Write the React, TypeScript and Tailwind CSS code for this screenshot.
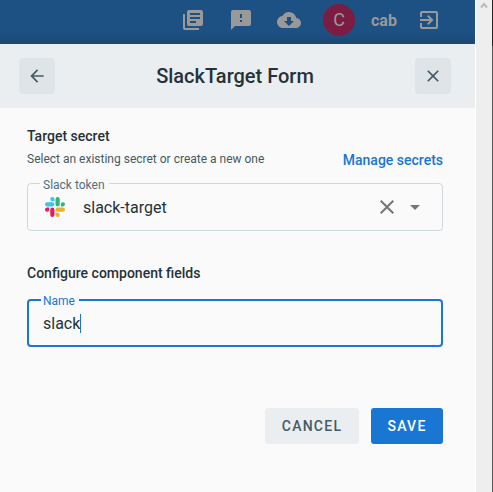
import type { ReactNode } from 'react';
import {
  MdLibraryBooks,
  MdSmsFailed,
  MdCloudDownload,
  MdExitToApp,
  MdArrowBack,
  MdClose,
  MdArrowDropDown,
} from 'react-icons/md';

function SlackLogo() {
  return (
    <svg width="20" height="20" viewBox="0 0 24 24" className="shrink-0">
      <path fill="#36c5f0" d="M8.834 0a2.528 2.528 0 0 0-2.521 2.522 2.528 2.528 0 0 0 2.521 2.521h2.522V2.522A2.528 2.528 0 0 0 8.834 0zM8.834 6.313H2.522A2.528 2.528 0 0 0 0 8.834a2.528 2.528 0 0 0 2.522 2.522h6.312a2.528 2.528 0 0 0 2.522-2.522 2.528 2.528 0 0 0-2.522-2.521z" />
      <path fill="#2eb67d" d="M18.956 8.834a2.528 2.528 0 0 1 2.522-2.521A2.528 2.528 0 0 1 24 8.834a2.528 2.528 0 0 1-2.522 2.522h-2.522V8.834zM17.688 8.834a2.528 2.528 0 0 1-2.523 2.522 2.527 2.527 0 0 1-2.52-2.522V2.522A2.527 2.527 0 0 1 15.165 0a2.528 2.528 0 0 1 2.523 2.522v6.312z" />
      <path fill="#ecb22e" d="M15.165 18.956a2.528 2.528 0 0 1 2.523 2.522A2.528 2.528 0 0 1 15.165 24a2.527 2.527 0 0 1-2.52-2.522v-2.522h2.52zM15.165 17.688a2.527 2.527 0 0 1-2.52-2.523 2.526 2.526 0 0 1 2.52-2.52h6.313A2.527 2.527 0 0 1 24 15.165a2.528 2.528 0 0 1-2.522 2.523h-6.313z" />
      <path fill="#e01e5a" d="M5.042 15.165a2.528 2.528 0 0 1-2.52 2.523A2.528 2.528 0 0 1 0 15.165a2.527 2.527 0 0 1 2.522-2.52h2.52v2.52zM6.313 15.165a2.527 2.527 0 0 1 2.521-2.52 2.527 2.527 0 0 1 2.521 2.52v6.313A2.528 2.528 0 0 1 8.834 24a2.528 2.528 0 0 1-2.521-2.522v-6.313z" />
    </svg>
  );
}

function TopBar() {
  return (
    <header className="flex h-11 items-start bg-linear-to-b from-[#1d5083] from-75% to-[#1c4870] pl-[181px] pt-1 text-[#999999]">
      <div className="flex h-8 items-center">
        <MdLibraryBooks size={24} />
        <MdSmsFailed size={24} className="ml-6" />
        <MdCloudDownload size={24} className="ml-6" />
        <div className="ml-[22px] flex size-8 items-center justify-center rounded-full bg-[#7d1c42] text-lg">C</div>
        <span className="ml-4 w-[26px] pt-0.5 text-base font-bold">cab</span>
        <MdExitToApp size={24} className="ml-5" />
      </div>
    </header>
  );
}

function IconButton({ label, children }: { label: string; children: ReactNode }) {
  return (
    <button aria-label={label} className="flex size-9 items-center justify-center rounded bg-[#dfe4e8] text-[#455a64]">
      {children}
    </button>
  );
}

function Scrollbar() {
  return (
    <div className="flex w-[18px] shrink-0 border-l border-white bg-[#eeeeee]">
      <div className="flex flex-1 justify-center pt-[2px]">
        <svg width="8" height="7" viewBox="0 0 8 7" className="-ml-px">
          <path d="M1 5.5L4 2L7 5.5" fill="none" stroke="#bababa" strokeWidth="2" />
        </svg>
      </div>
      <div className="w-px bg-[#59595b]">
        <div className="h-[46px] bg-[#222222]" />
      </div>
    </div>
  );
}

export default function App() {
  return (
    <div className="flex h-[492px] w-[493px] overflow-hidden bg-[#fafafa] font-[Roboto,sans-serif] text-[#263238]">
      <div className="flex w-[475px] flex-col">
        <TopBar />
        <div className="flex h-16 items-center justify-between bg-[#eaeef1] pl-[19px] pr-6">
          <IconButton label="Back"><MdArrowBack size={20} /></IconButton>
          <h1 className="text-xl font-medium">SlackTarget Form</h1>
          <IconButton label="Close"><MdClose size={20} /></IconButton>
        </div>
        <main className="flex flex-col pl-[27px] pr-8 pt-[18px]">
          <h2 className="text-sm font-medium leading-5">Target secret</h2>
          <div className="flex h-6 items-start justify-between">
            <p className="pt-[5px] text-xs leading-4 text-[#455a64]">Select an existing secret or create a new one</p>
            <a className="pt-1 text-sm font-medium leading-5 text-[#1976d2]">Manage secrets</a>
          </div>
          <div className="relative mt-[13px] flex h-12 items-center rounded border border-[#cfd8dc] pl-[17px] pr-[15px]">
            <span className="absolute -top-[6px] left-3 bg-[#fafafa] pl-[3px] pr-1 text-xs leading-[14px] text-[#546e7a]">Slack token</span>
            <SlackLogo />
            <span className="ml-[18px] flex-1 pt-0.5 text-base">slack-target</span>
            <MdClose size={24} className="text-[#757575]" />
            <MdArrowDropDown size={24} className="ml-1 text-[#757575]" />
          </div>
          <h2 className="mt-8 text-sm font-medium leading-5">Configure component fields</h2>
          <div className="relative mt-4 flex h-12 items-center rounded border-2 border-[#1976d2] pl-3.5">
            <span className="absolute -top-[7px] left-3 bg-[#fafafa] pl-0.5 pr-1 text-xs leading-[14px] text-[#1976d2]">Name</span>
            <span className="pt-0.5 text-base">slack</span>
            <span className="h-[19px] w-px bg-[#1976d2]" />
          </div>
          <div className="mt-[61px] flex justify-end gap-3 text-sm font-medium tracking-[1.25px]">
            <button className="h-9 w-[94px] rounded-[3px] bg-[#eaeef1] text-[#455a64]">CANCEL</button>
            <button className="h-9 w-[72px] rounded-[3px] bg-[#1976d2] text-white">SAVE</button>
          </div>
        </main>
      </div>
      <Scrollbar />
    </div>
  );
}
